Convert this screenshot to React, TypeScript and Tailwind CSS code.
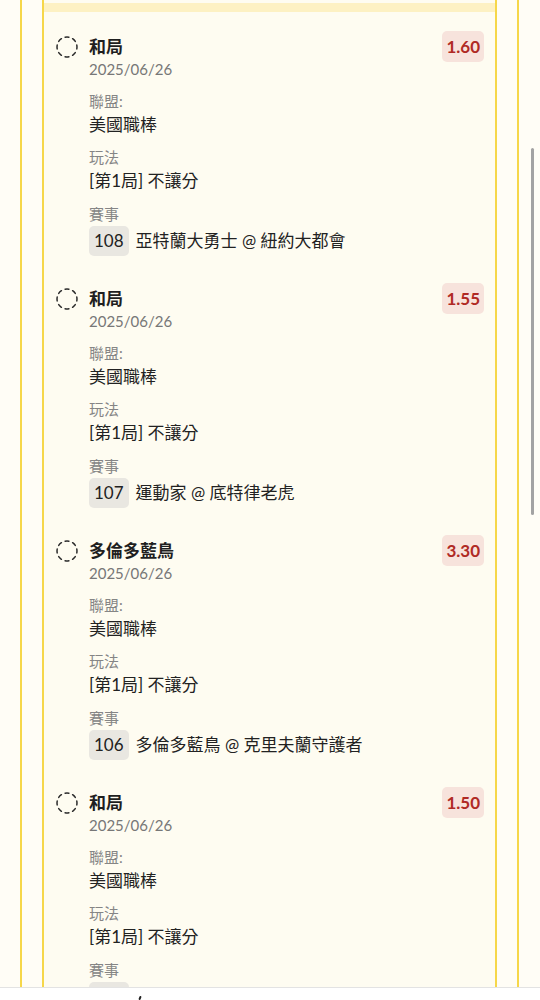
import { CircleDashed } from 'lucide-react';

type Bet = {
  pick: string;
  date: string;
  odds: string;
  league: string;
  market: string;
  no: string;
  match: string;
};

const bets: Bet[] = [
  { pick: '和局', date: '2025/06/26', odds: '1.60', league: '美國職棒', market: '[第1局] 不讓分', no: '108', match: '亞特蘭大勇士 @ 紐約大都會' },
  { pick: '和局', date: '2025/06/26', odds: '1.55', league: '美國職棒', market: '[第1局] 不讓分', no: '107', match: '運動家 @ 底特律老虎' },
  { pick: '多倫多藍鳥', date: '2025/06/26', odds: '3.30', league: '美國職棒', market: '[第1局] 不讓分', no: '106', match: '多倫多藍鳥 @ 克里夫蘭守護者' },
  { pick: '和局', date: '2025/06/26', odds: '1.50', league: '美國職棒', market: '[第1局] 不讓分', no: '105', match: '堪薩斯皇家 @ 西雅圖水手' },
];

function BetCard({ bet }: { bet: Bet }) {
  return (
    <div className="flex gap-[10px] pl-[11px] pr-[11px] pt-[19px] pb-[8px]">
      <div className="flex h-[31px] items-center">
        <CircleDashed size={24} strokeWidth={1.5} className="text-[#2a2a2a]" />
      </div>
      <div className="flex-1">
        <div className="flex h-[31px] items-center justify-between">
          <span className="text-[17px] font-bold text-[#1f1f1f]">{bet.pick}</span>
          <span className="rounded-[5px] bg-[#f7e3dc] px-[4px] text-[17px] font-bold leading-[31px] text-[#b02a24]">
            {bet.odds}
          </span>
        </div>
        <div className="text-[15px] leading-[14px] text-[#777]">{bet.date}</div>
        <div className="mt-[15px] text-[15px] leading-[20px] text-[#858585]">聯盟:</div>
        <div className="mt-[2px] text-[17px] leading-[24px] text-[#222]">{bet.league}</div>
        <div className="mt-[10px] text-[15px] leading-[20px] text-[#858585]">玩法</div>
        <div className="mt-[2px] text-[17px] leading-[24px] text-[#222]">{bet.market}</div>
        <div className="mt-[11px] text-[15px] leading-[20px] text-[#858585]">賽事</div>
        <div className="mt-[2px] flex items-center gap-[7px] text-[17px] text-[#222]">
          <span className="rounded-[5px] bg-[#e9e7e1] px-[5px] leading-[30px]">{bet.no}</span>
          <span>{bet.match}</span>
        </div>
      </div>
    </div>
  );
}

export default function App() {
  return (
    <div
      className="relative h-[1000px] overflow-hidden bg-[#fffdf6]"
      style={{ fontFamily: 'Lato, "Noto Sans CJK TC", sans-serif' }}
    >
      <div className="ml-[20px] mr-[21px] h-full border-x-2 border-[#f6d74a] px-[20px]">
        <div className="h-full border-x-2 border-[#f6d74a] bg-[#fefcf1] pt-[3px]">
          <div className="h-[9px] bg-[#fdf1c3]" />
          {bets.map((b, i) => (
            <BetCard key={i} bet={b} />
          ))}
        </div>
      </div>

      {/* overlay scrollbar */}
      <div className="absolute left-[531px] top-[148px] h-[367px] w-[3px] rounded-full bg-[#a3a3a3]" />

      {/* bottom bar */}
      <div className="absolute bottom-0 left-0 right-0 h-[13px] border-t border-[#e3e3e3] bg-white">
        <div className="absolute left-[139px] top-[8px] h-[4px] w-[2px] rotate-[20deg] rounded-sm bg-[#222]" />
      </div>
    </div>
  );
}
